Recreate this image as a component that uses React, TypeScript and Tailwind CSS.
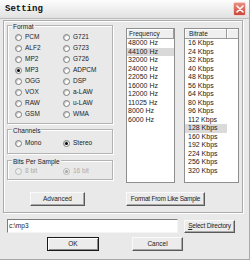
import React from "react";

function Radio({ label, checked, disabled }: { label: string; checked?: boolean; disabled?: boolean }) {
  return (
    <div className="flex items-center h-[11px]">
      <span
        className={
          disabled
            ? "w-[7px] h-[7px] rounded-full border border-[#b8b8b8] bg-[#ededed] flex items-center justify-center shrink-0"
            : "w-[7px] h-[7px] rounded-full border border-[#7c7c7c] bg-white shadow-[inset_1px_1px_0_#c8c8c8] flex items-center justify-center shrink-0"
        }
      >
        {checked && <span className={disabled ? "w-[3px] h-[3px] rounded-full bg-[#a5a5a5]" : "w-[3px] h-[3px] rounded-full bg-black"} />}
      </span>
      <span className={disabled ? "ml-[3px] text-[6.5px] leading-none text-[#ababab]" : "ml-[3px] text-[6.5px] leading-none text-[#222]"}>
        {label}
      </span>
    </div>
  );
}

function Group({ label, className, children }: { label: string; className: string; children: React.ReactNode }) {
  return (
    <div className={"relative border border-[#b3b3b3] shadow-[inset_1px_1px_0_#fff,1px_1px_0_#fff] " + className}>
      <span className="absolute left-[4px] -top-[3px] px-[1px] bg-[#e9e9e9] text-[6.5px] leading-[8px] text-[#222]">{label}</span>
      {children}
    </div>
  );
}

function Button({ children, className, def }: { children: React.ReactNode; className: string; def?: boolean }) {
  return (
    <div
      className={
        (def
          ? "border border-[#1a1a1a] shadow-[inset_1px_1px_0_#fff,inset_-1px_-1px_0_#8a8a8a] "
          : "border border-t-[#fafafa] border-l-[#fafafa] border-b-[#5a5a5a] border-r-[#5a5a5a] shadow-[inset_-1px_-1px_0_#a8a8a8] ") +
        "bg-[#ececec] flex items-center justify-center text-[6.5px] leading-none text-[#222] whitespace-nowrap " +
        className
      }
    >
      {children}
    </div>
  );
}

const freqs = ["48000 Hz", "44100 Hz", "32000 Hz", "24000 Hz", "22050 Hz", "16000 Hz", "12000 Hz", "11025 Hz", "8000 Hz", "6000 Hz"];
const rates = ["16 Kbps", "24 Kbps", "32 Kbps", "40 Kbps", "48 Kbps", "56 Kbps", "64 Kbps", "80 Kbps", "96 Kbps", "112 Kbps", "128 Kbps", "160 Kbps", "192 Kbps", "224 Kbps", "256 Kbps", "320 Kbps"];

export default function App() {
  return (
    <div className="w-[250px] h-[260px] bg-[#e9e9e9] overflow-hidden font-['Liberation_Sans',Arial,sans-serif] border-r border-b border-[#a9a9a9]">
      {/* Title bar */}
      <div className="h-[19px] flex items-center justify-between bg-gradient-to-b from-[#fdfdfd] to-[#e1e1e1] border-b border-[#bcbcbc] pl-[5px] pr-[3px]">
        <span className="font-['Liberation_Mono',monospace] font-bold text-[9px] leading-none text-[#111]">Setting</span>
        <div className="w-[13px] h-[14px] rounded-[2px] bg-gradient-to-b from-[#eb8c80] to-[#c8443a] border border-[#f4d0cc] flex items-center justify-center">
          <svg width="8" height="8" viewBox="0 0 8 8">
            <path d="M1 1 L7 7 M7 1 L1 7" stroke="#fff" strokeWidth="1.6" strokeLinecap="round" />
          </svg>
        </div>
      </div>

      {/* Frame */}
      <div className="ml-[3px] mt-[1px] w-[240px] h-[193px] border border-[#ababab] shadow-[inset_1px_1px_0_#fff,1px_1px_0_#fff] pl-[3px] pt-[4px]">
        <div className="flex h-[159px]">
          {/* left column */}
          <div className="w-[106px] flex flex-col">
            <Group label="Format" className="h-[99px] pt-[6px] pl-[7px]">
              <div className="grid grid-cols-[48px_1fr]">
                <div className="flex flex-col">
                  <Radio label="PCM" />
                  <Radio label="ALF2" />
                  <Radio label="MP2" />
                  <Radio label="MP3" checked />
                  <Radio label="OGG" />
                  <Radio label="VOX" />
                  <Radio label="RAW" />
                  <Radio label="GSM" />
                </div>
                <div className="flex flex-col">
                  <Radio label="G721" />
                  <Radio label="G723" />
                  <Radio label="G726" />
                  <Radio label="ADPCM" />
                  <Radio label="DSP" />
                  <Radio label="a-LAW" />
                  <Radio label="u-LAW" />
                  <Radio label="WMA" />
                </div>
              </div>
            </Group>
            <Group label="Channels" className="mt-[5px] h-[25px] pt-[8px] pl-[7px]">
              <div className="grid grid-cols-[48px_1fr]">
                <Radio label="Mono" />
                <Radio label="Stereo" checked />
              </div>
            </Group>
            <Group label="Bits Per Sample" className="mt-[6px] h-[20px] pt-[5px] pl-[7px]">
              <div className="grid grid-cols-[48px_1fr]">
                <Radio label="8 bit" disabled />
                <Radio label="16 bit" checked disabled />
              </div>
            </Group>
          </div>

          {/* Frequency list */}
          <div className="ml-[13px] mt-[3px] w-[49px] h-[155px] bg-white border border-[#8f8f8f] flex flex-col">
            <div className="h-[10px] flex bg-[#efefef] border-b border-[#9b9b9b]">
              <div className="flex-1 pl-[2px] text-[6.5px] leading-[9px] text-[#222] border-r border-[#9b9b9b] shadow-[inset_1px_1px_0_#fff]">
                Frequency
              </div>
            </div>
            {freqs.map((f) => (
              <div
                key={f}
                className={
                  f === "44100 Hz"
                    ? "h-[8.5px] pl-[1px] text-[7px] leading-[8.5px] text-[#222] bg-[#d9d9d9]"
                    : "h-[8.5px] pl-[1px] text-[7px] leading-[8.5px] text-[#222]"
                }
              >
                {f}
              </div>
            ))}
          </div>

          {/* Bitrate list */}
          <div className="ml-[9px] mt-[3px] w-[55px] h-[155px] bg-white border border-[#8f8f8f] flex flex-col">
            <div className="h-[10px] flex bg-[#efefef] border-b border-[#9b9b9b]">
              <div className="w-[42px] pl-[4px] text-[6.5px] leading-[9px] text-[#222] border-r border-[#9b9b9b] shadow-[inset_1px_1px_0_#fff]">
                Bitrate
              </div>
              <div className="flex-1 shadow-[inset_1px_1px_0_#fff]" />
            </div>
            {rates.map((r) => (
              <div key={r} className="h-[8.5px] flex">
                <div
                  className={
                    r === "128 Kbps"
                      ? "w-[42px] pl-[3px] text-[7px] leading-[8.5px] text-[#222] bg-[#dadada]"
                      : "w-[42px] pl-[3px] text-[7px] leading-[8.5px] text-[#222]"
                  }
                >
                  {r}
                </div>
              </div>
            ))}
          </div>
        </div>

        {/* button row inside frame */}
        <div className="flex mt-[8px]">
          <Button className="ml-[23px] w-[55px] h-[14px]">Advanced</Button>
          <Button className="ml-[41px] w-[79px] h-[14px] tracking-[-0.25px]">Format From Like Sample</Button>
        </div>
      </div>

      {/* directory row */}
      <div className="flex items-center mt-[6px] ml-[7px]">
        <div className="w-[171px] h-[14px] bg-white border border-t-[#7d7d7d] border-l-[#7d7d7d] border-b-[#f5f5f5] border-r-[#f5f5f5] pl-[1px] flex items-center text-[6.5px] leading-none text-[#222]">
          c:\mp3
        </div>
        <Button className="ml-[6px] w-[51px] h-[13px] tracking-[-0.2px]">
          <span className="underline">S</span>elect Directory
        </Button>
      </div>

      {/* OK / Cancel */}
      <div className="flex mt-[4px]">
        <Button def className="ml-[47px] w-[52px] h-[14px]">OK</Button>
        <Button className="ml-[33px] w-[51px] h-[14px]">Cancel</Button>
      </div>
    </div>
  );
}
